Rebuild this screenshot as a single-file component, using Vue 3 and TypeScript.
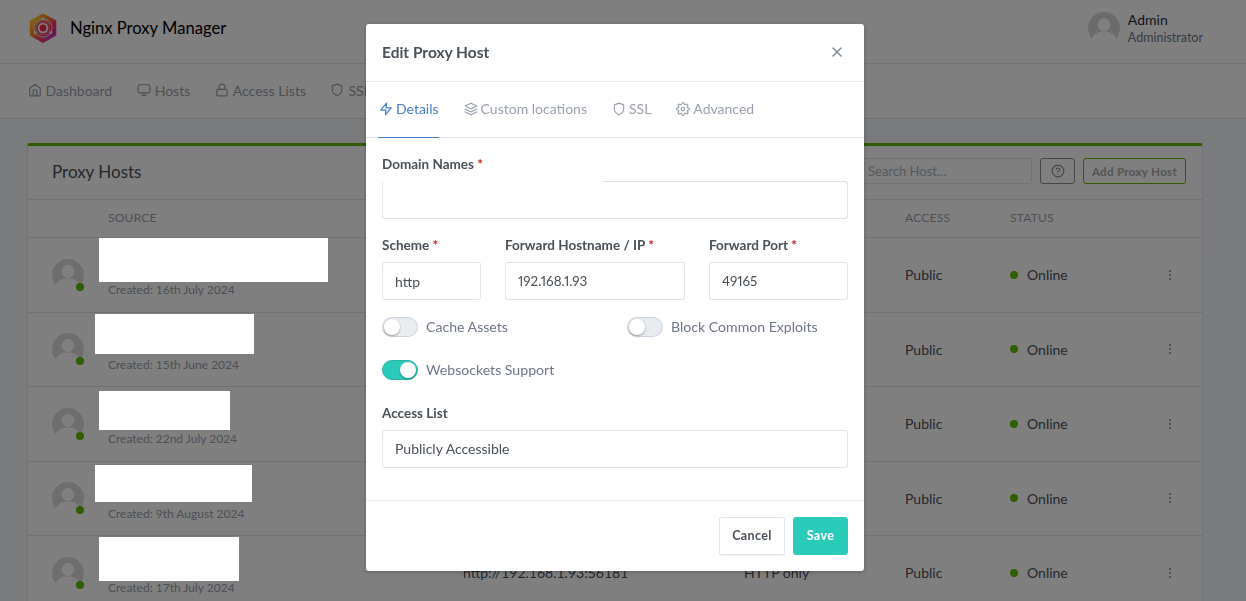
<script setup lang="ts">
// 代理主机列表 + 编辑弹窗
interface HostRow {
  created: string
  dest: string
  ssl: string
  box: { left: number; top: number; width: number; height: number }
}

const icons: Record<string, string> = {
  home: '<path d="M3 9l9-7 9 7v11a2 2 0 0 1-2 2H5a2 2 0 0 1-2-2z"/><polyline points="9 22 9 12 15 12 15 22"/>',
  monitor: '<rect x="2" y="3" width="20" height="14" rx="2"/><line x1="8" y1="21" x2="16" y2="21"/><line x1="12" y1="17" x2="12" y2="21"/>',
  lock: '<rect x="3" y="11" width="18" height="11" rx="2"/><path d="M7 11V7a5 5 0 0 1 10 0v4"/>',
  shield: '<path d="M12 22s8-4 8-10V5l-8-3-8 3v7c0 6 8 10 8 10z"/>',
  zap: '<polygon points="13 2 3 14 12 14 11 22 21 10 12 10 13 2"/>',
  layers: '<polygon points="12 2 2 7 12 12 22 7 12 2"/><polyline points="2 17 12 22 22 17"/><polyline points="2 12 12 17 22 12"/>',
  settings: '<circle cx="12" cy="12" r="3"/><path d="M19.4 15a1.65 1.65 0 0 0 .33 1.82l.06.06a2 2 0 0 1 0 2.83 2 2 0 0 1-2.83 0l-.06-.06a1.65 1.65 0 0 0-1.82-.33 1.65 1.65 0 0 0-1 1.51V21a2 2 0 0 1-2 2 2 2 0 0 1-2-2v-.09A1.65 1.65 0 0 0 9 19.4a1.65 1.65 0 0 0-1.82.33l-.06.06a2 2 0 0 1-2.83 0 2 2 0 0 1 0-2.83l.06-.06a1.65 1.65 0 0 0 .33-1.82 1.65 1.65 0 0 0-1.51-1H3a2 2 0 0 1-2-2 2 2 0 0 1 2-2h.09A1.65 1.65 0 0 0 4.6 9a1.65 1.65 0 0 0-.33-1.82l-.06-.06a2 2 0 0 1 0-2.83 2 2 0 0 1 2.83 0l.06.06a1.65 1.65 0 0 0 1.82.33H9a1.65 1.65 0 0 0 1-1.51V3a2 2 0 0 1 2-2 2 2 0 0 1 2 2v.09a1.65 1.65 0 0 0 1 1.51 1.65 1.65 0 0 0 1.82-.33l.06-.06a2 2 0 0 1 2.83 0 2 2 0 0 1 0 2.83l-.06.06a1.65 1.65 0 0 0-.33 1.82V9a1.65 1.65 0 0 0 1.51 1H21a2 2 0 0 1 2 2 2 2 0 0 1-2 2h-.09a1.65 1.65 0 0 0-1.51 1z"/>',
  help: '<circle cx="12" cy="12" r="10"/><path d="M9.09 9a3 3 0 0 1 5.83 1c0 2-3 3-3 3"/><line x1="12" y1="17" x2="12.01" y2="17"/>',
  more: '<circle cx="12" cy="12" r="1"/><circle cx="12" cy="5" r="1"/><circle cx="12" cy="19" r="1"/>',
  close: '<line x1="18" y1="6" x2="6" y2="18"/><line x1="6" y1="6" x2="18" y2="18"/>',
}

const navItems = [
  { label: 'Dashboard', icon: 'home' },
  { label: 'Hosts', icon: 'monitor' },
  { label: 'Access Lists', icon: 'lock' },
  { label: 'SSL Certificates', icon: 'shield' },
]

const tabs = [
  { label: 'Details', icon: 'zap', active: true },
  { label: 'Custom locations', icon: 'layers', active: false },
  { label: 'SSL', icon: 'shield', active: false },
  { label: 'Advanced', icon: 'settings', active: false },
]

// box = 打码白块,相对于所在行
const rows: HostRow[] = [
  { created: 'Created: 16th July 2024', dest: '', ssl: '', box: { left: 71, top: 0, width: 229, height: 44 } },
  { created: 'Created: 15th June 2024', dest: '', ssl: '', box: { left: 67, top: 1.5, width: 159, height: 40 } },
  { created: 'Created: 22nd July 2024', dest: '', ssl: '', box: { left: 71, top: 4, width: 131, height: 39 } },
  { created: 'Created: 9th August 2024', dest: '', ssl: '', box: { left: 67, top: 3.5, width: 157, height: 37 } },
  { created: 'Created: 17th July 2024', dest: 'http://192.168.1.93:56181', ssl: 'HTTP only', box: { left: 71, top: 1, width: 140, height: 44 } },
]

const boxStyle = (b: HostRow['box']) => ({
  left: `${b.left}px`,
  top: `${b.top}px`,
  width: `${b.width}px`,
  height: `${b.height}px`,
})
</script>

<template>
  <div class="page">
    <header class="topbar">
      <div class="brand">
        <svg class="logo" viewBox="0 0 32 32" width="34" height="34">
          <defs>
            <linearGradient id="hexGrad" x1="0.05" y1="0.2" x2="0.85" y2="0.95">
              <stop offset="0" stop-color="#ffd21f" />
              <stop offset="0.4" stop-color="#ff7a2a" />
              <stop offset="0.68" stop-color="#f5356b" />
              <stop offset="1" stop-color="#c22fd0" />
            </linearGradient>
          </defs>
          <polygon points="16,2 28.5,9 28.5,23 16,30 3.5,23 3.5,9" fill="url(#hexGrad)" />
          <circle cx="16" cy="16" r="8.6" fill="none" stroke="#cfcfcf" stroke-width="1" />
          <circle cx="16" cy="16" r="6.6" fill="#f7f7f7" />
          <circle cx="16" cy="16" r="5.8" fill="none" stroke="#f2476a" stroke-width="1.6" />
          <circle cx="16" cy="16" r="3.2" fill="#f5283c" />
          <circle cx="16" cy="7.4" r="1.3" fill="#f4f4f4" />
          <circle cx="8.6" cy="20.4" r="1.3" fill="#f4f4f4" />
          <circle cx="23.4" cy="20.4" r="1.3" fill="#f4f4f4" />
        </svg>
        <span class="brand-name">Nginx Proxy Manager</span>
      </div>
      <div class="user">
        <svg class="avatar" viewBox="0 0 32 32" width="32" height="32">
          <circle cx="16" cy="16" r="16" fill="#d6d6d6" />
          <circle cx="16" cy="12.5" r="6.5" fill="#fff" />
          <path d="M3.5 27 C6 21 11 19.5 16 19.5 S26 21 28.5 27 L28 32 H4 Z" fill="#fff" />
        </svg>
        <div class="user-text">
          <div class="user-name">Admin</div>
          <div class="user-role">Administrator</div>
        </div>
      </div>
    </header>

    <nav class="navbar">
      <a v-for="item in navItems" :key="item.label" class="nav-link">
        <svg class="icon" viewBox="0 0 24 24" v-html="icons[item.icon]"></svg>
        {{ item.label }}
      </a>
    </nav>

    <main class="content">
      <section class="card">
        <div class="card-header">
          <h3 class="card-title">Proxy Hosts</h3>
          <div class="card-actions">
            <input class="search" placeholder="Search Host…" />
            <button class="btn-help">
              <svg class="icon" viewBox="0 0 24 24" v-html="icons.help"></svg>
            </button>
            <button class="btn-add">Add Proxy Host</button>
          </div>
        </div>

        <div class="table-row table-head">
          <div></div>
          <div>SOURCE</div>
          <div>DESTINATION</div>
          <div>SSL</div>
          <div>ACCESS</div>
          <div>STATUS</div>
          <div></div>
        </div>

        <div v-for="(row, i) in rows" :key="i" class="table-row host-row">
          <div class="avatar-cell">
            <span class="avatar-wrap">
              <svg viewBox="0 0 32 32" width="32" height="32">
                <circle cx="16" cy="16" r="16" fill="#dcdcdc" />
                <circle cx="16" cy="12.5" r="6.5" fill="#fff" />
                <path d="M3.5 27 C6 21 11 19.5 16 19.5 S26 21 28.5 27 L28 32 H4 Z" fill="#fff" />
              </svg>
              <span class="avatar-dot"></span>
            </span>
          </div>
          <div class="source-cell">
            <span class="redact" :style="boxStyle(row.box)"></span>
            <div class="created">{{ row.created }}</div>
          </div>
          <div>{{ row.dest }}</div>
          <div>{{ row.ssl }}</div>
          <div>Public</div>
          <div class="status"><span class="status-dot"></span>Online</div>
          <div class="actions">
            <svg class="icon-more" viewBox="0 0 24 24" v-html="icons.more"></svg>
          </div>
        </div>
      </section>
    </main>
  </div>

  <div class="backdrop"></div>

  <div class="modal-wrap">
    <div class="modal">
      <div class="modal-header">
        <h5 class="modal-title">Edit Proxy Host</h5>
        <svg class="modal-close" viewBox="0 0 24 24" v-html="icons.close"></svg>
      </div>

      <ul class="tabs">
        <li v-for="tab in tabs" :key="tab.label" class="tab" :class="{ active: tab.active }">
          <svg class="icon" viewBox="0 0 24 24" v-html="icons[tab.icon]"></svg>
          {{ tab.label }}
        </li>
      </ul>

      <form class="modal-body" @submit.prevent>
        <div class="field">
          <label class="label">Domain Names <span class="req">*</span></label>
          <div class="input domain-input"><span class="domain-mask"></span></div>
        </div>

        <div class="field forward-grid">
          <div>
            <label class="label">Scheme <span class="req">*</span></label>
            <div class="input scheme">http</div>
          </div>
          <div>
            <label class="label">Forward Hostname / IP <span class="req">*</span></label>
            <input class="input numeric" value="192.168.1.93" />
          </div>
          <div>
            <label class="label">Forward Port <span class="req">*</span></label>
            <input class="input numeric" value="49165" />
          </div>
        </div>

        <div class="switch-grid">
          <label class="switch"><span class="track"></span><span class="switch-text">Cache Assets</span></label>
          <label class="switch"><span class="track"></span><span class="switch-text">Block Common Exploits</span></label>
          <label class="switch on"><span class="track"></span><span class="switch-text">Websockets Support</span></label>
        </div>

        <div class="field access-field">
          <label class="label">Access List</label>
          <div class="input">Publicly Accessible</div>
        </div>
      </form>

      <div class="modal-footer">
        <button class="btn btn-cancel">Cancel</button>
        <button class="btn btn-save">Save</button>
      </div>
    </div>
  </div>
</template>

<style>
html,
body {
  height: 100%;
  overflow: hidden;
  background: #f5f7fb;
}
</style>

<style scoped>
.page {
  height: 601px;
  overflow: hidden;
  font-family: Lato, 'Noto Sans', sans-serif;
  font-size: 14px;
  color: #495057;
}

.icon {
  width: 14px;
  height: 14px;
  fill: none;
  stroke: currentColor;
  stroke-width: 2;
  stroke-linecap: round;
  stroke-linejoin: round;
  flex: none;
}

/* 顶栏 */
.topbar {
  height: 64px;
  box-sizing: border-box;
  background: #fff;
  border-bottom: 1px solid rgba(0, 40, 100, 0.12);
  display: flex;
  align-items: center;
  justify-content: space-between;
  padding: 0 43px 7px 26px;
}

.brand {
  display: flex;
  align-items: center;
  gap: 10px;
}

.brand-name {
  font-size: 16.6px;
  padding-bottom: 1px;
  color: #000;
}

.logo {
  display: block;
}

.user {
  display: flex;
  align-items: center;
  gap: 8px;
}

.user-text {
  padding-top: 1px;
}

.user-name {
  font-size: 14px;
  line-height: 18px;
  color: #1e2a38;
}

.user-role {
  font-size: 12.5px;
  line-height: 17px;
  color: #6e7687;
}

/* 导航 */
.navbar {
  height: 55px;
  box-sizing: border-box;
  background: #fff;
  border-bottom: 1px solid rgba(0, 40, 100, 0.12);
  display: flex;
  align-items: center;
  gap: 24.5px;
  padding: 0 27.5px 2px;
}

.nav-link {
  display: flex;
  align-items: center;
  gap: 4px;
  color: #9aa0ac;
  font-size: 14px;
}

/* 卡片 */
.content {
  padding: 24px 43px 0 27px;
}

.card {
  background: #fff;
  border: 1px solid rgba(0, 40, 100, 0.12);
  border-top: 3px solid #5eba00;
  border-radius: 3px;
}

.card-header {
  height: 54px;
  box-sizing: border-box;
  border-bottom: 1px solid rgba(0, 40, 100, 0.12);
  display: flex;
  align-items: center;
  justify-content: space-between;
  padding: 0 16px 0 24px;
}

.card-title {
  margin: 0 0 2px;
  font-size: 17px;
  font-weight: 400;
  color: #495057;
}

.card-actions {
  display: flex;
  align-items: center;
  gap: 8px;
  margin-bottom: 3px;
}

.search {
  width: 176px;
  height: 26px;
  box-sizing: border-box;
  border: 1px solid rgba(0, 40, 100, 0.12);
  border-radius: 3px;
  padding: 0 11px;
  font: 13px Lato, 'Noto Sans', sans-serif;
  background: #fff;
}

.search::placeholder {
  color: #adb5bd;
}

.btn-help {
  width: 35px;
  height: 26px;
  box-sizing: border-box;
  padding: 0;
  display: flex;
  align-items: center;
  justify-content: center;
  background: transparent;
  border: 1px solid #868e96;
  border-radius: 3px;
  color: #868e96;
}

.btn-add {
  width: 103px;
  height: 26px;
  box-sizing: border-box;
  padding: 0;
  background: transparent;
  border: 1px solid #5eba00;
  border-radius: 3px;
  color: #aaa;
  font: 700 11.5px Lato, 'Noto Sans', sans-serif;
  letter-spacing: 0.03em;
}

/* 表格 */
.table-row {
  display: grid;
  grid-template-columns: 80px 355px 281px 161px 105px 140px 40px 1fr;
  align-items: center;
  position: relative;
  box-sizing: border-box;
  border-bottom: 1px solid rgba(0, 40, 100, 0.12);
}

.table-head {
  height: 38px;
  padding-bottom: 2px;
  font-size: 12px;
  letter-spacing: 0.02em;
  color: #9aa0ac;
}

.host-row {
  height: 74.5px;
  color: #495057;
}

.avatar-cell {
  padding-left: 24px;
}

.avatar-wrap {
  position: relative;
  display: block;
  width: 32px;
  height: 32px;
}

.avatar-wrap svg,
.avatar {
  display: block;
}

.avatar-dot {
  position: absolute;
  right: 0;
  bottom: 0;
  width: 8px;
  height: 8px;
  border-radius: 50%;
  background: #5eba00;
}

.source-cell {
  align-self: end;
  padding-bottom: 13.5px;
}

.created {
  font-size: 12px;
  line-height: 16px;
  color: #9aa0ac;
}

.redact {
  position: absolute;
  background: #fff;
  z-index: 20;
}

.status {
  display: flex;
  align-items: center;
  gap: 9px;
}

.status-dot {
  width: 8px;
  height: 8px;
  border-radius: 50%;
  background: #5eba00;
}

.actions {
  display: flex;
  justify-content: center;
}

.icon-more {
  width: 14px;
  height: 14px;
  fill: #9aa0ac;
  stroke: #9aa0ac;
  stroke-width: 2;
}

/* 弹窗 */
.backdrop {
  position: fixed;
  inset: 0;
  background: rgba(0, 0, 0, 0.5);
  z-index: 10;
}

.modal-wrap {
  position: fixed;
  top: 0;
  left: 0;
  width: calc(100% - 16px);
  display: flex;
  justify-content: center;
  padding-top: 24px;
  z-index: 30;
}

.modal {
  width: 498px;
  background: #fff;
  border-radius: 3px;
  box-shadow: 0 1px 4px rgba(0, 0, 0, 0.25);
  font-family: Lato, 'Noto Sans', sans-serif;
  font-size: 14px;
  color: #495057;
}

.modal-header {
  height: 58px;
  box-sizing: border-box;
  border-bottom: 1px solid #e9ecef;
  display: flex;
  align-items: center;
  justify-content: space-between;
  padding: 0 19px 2px 16px;
}

.modal-title {
  margin: 0;
  font-size: 15.5px;
  font-weight: 700;
  color: #495057;
}

.modal-close {
  width: 16px;
  height: 16px;
  fill: none;
  stroke: #868e96;
  stroke-width: 2.4;
  stroke-linecap: round;
}

.tabs {
  list-style: none;
  margin: 0;
  height: 56px;
  box-sizing: border-box;
  padding: 0 12px;
  border-bottom: 1px solid rgba(0, 40, 100, 0.12);
  display: flex;
  gap: 24px;
}

.tab {
  display: flex;
  align-items: center;
  gap: 3px;
  height: 56px;
  box-sizing: border-box;
  padding: 0 0 2px 1px;
  font-size: 14px;
  color: #9aa0ac;
  border-bottom: 1px solid transparent;
}

.tab.active {
  color: #467fcf;
  border-bottom-color: #467fcf;
}

.modal-body {
  padding: 16px 16px 32px;
}

.label {
  display: block;
  font-size: 13.5px;
  font-weight: 700;
  line-height: 20px;
  margin-bottom: 7px;
}

.req {
  color: #cd201f;
}

.field {
  margin-bottom: 16px;
}

.access-field {
  margin-bottom: 0;
}

.input {
  display: block;
  width: 100%;
  height: 38px;
  box-sizing: border-box;
  border: 1px solid rgba(0, 40, 100, 0.12);
  border-radius: 3px;
  padding: 0 12px;
  background: #fff;
  font: 14px Lato, 'Noto Sans', sans-serif;
  line-height: 36px;
  color: #495057;
  outline: none;
}

.numeric {
  font-size: 13.4px;
  font-variant-numeric: proportional-nums;
  padding-bottom: 1px;
}

.domain-input {
  position: relative;
}

/* 打码块压住输入框上边框 */
.domain-mask {
  position: absolute;
  left: -1px;
  top: -1px;
  width: 221px;
  height: 2px;
  background: #fff;
}

.scheme {
  line-height: 38px;
}

.forward-grid {
  display: grid;
  grid-template-columns: 99px 180px 139px;
  column-gap: 24px;
}

.switch-grid {
  display: grid;
  grid-template-columns: 1fr 1fr;
  column-gap: 24px;
  row-gap: 21px;
  margin-bottom: 22px;
}

.switch {
  display: flex;
  align-items: center;
  gap: 8px;
  height: 22px;
  color: #6e7687;
  font-size: 14.1px;
}

.switch-text {
  padding-bottom: 2px;
}

.track {
  position: relative;
  width: 36px;
  height: 20px;
  box-sizing: border-box;
  border-radius: 10px;
  background: #e9ecef;
  border: 1px solid rgba(0, 40, 100, 0.12);
  flex: none;
}

.track::before {
  content: '';
  position: absolute;
  left: 1px;
  top: 1px;
  width: 16px;
  height: 16px;
  border-radius: 50%;
  background: #fff;
  box-shadow: 0 1px 2px rgba(0, 0, 0, 0.35);
}

.switch.on .track {
  background: #2bcbba;
  border-color: #2bb5a5;
}

.switch.on .track::before {
  left: 17px;
}

.modal-footer {
  border-top: 1px solid #e9ecef;
  padding: 16px;
  display: flex;
  justify-content: flex-end;
  gap: 8px;
}

.btn {
  height: 38px;
  box-sizing: border-box;
  border-radius: 3px;
  font: 700 12.5px Lato, 'Noto Sans', sans-serif;
  letter-spacing: 0.03em;
  padding: 0 0 2px;
}

.btn-cancel {
  width: 66px;
  background: #fff;
  border: 1px solid rgba(0, 40, 100, 0.12);
  color: #495057;
  box-shadow: 0 1px 1px rgba(0, 0, 0, 0.05);
}

.btn-save {
  width: 55px;
  background: #2bcbba;
  border: 1px solid #2bcbba;
  color: #fff;
}
</style>
